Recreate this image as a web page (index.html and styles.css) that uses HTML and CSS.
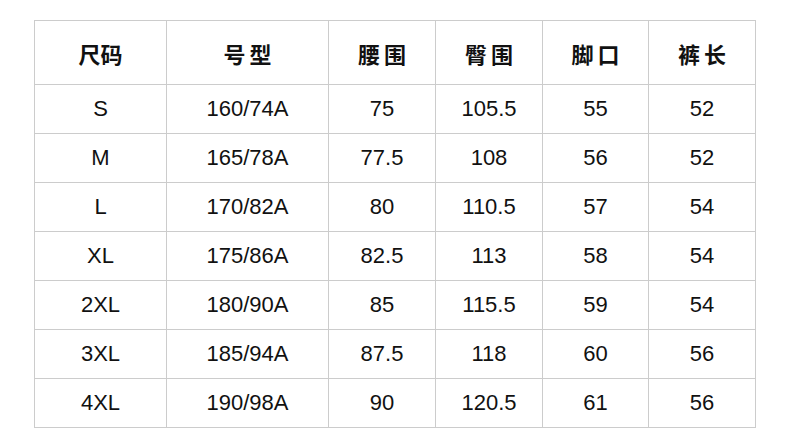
FILE: index.html
```html
<!DOCTYPE html>
<html lang="zh">
<head>
<meta charset="utf-8">
<link rel="stylesheet" href="styles.css">
</head>
<body>
<div class="size-table">
  <div class="cell head tight">尺码</div>
  <div class="cell head">号型</div>
  <div class="cell head">腰围</div>
  <div class="cell head">臀围</div>
  <div class="cell head">脚口</div>
  <div class="cell head">裤长</div>

  <div class="cell">S</div><div class="cell">160/74A</div><div class="cell">75</div><div class="cell">105.5</div><div class="cell">55</div><div class="cell">52</div>
  <div class="cell">M</div><div class="cell">165/78A</div><div class="cell">77.5</div><div class="cell">108</div><div class="cell">56</div><div class="cell">52</div>
  <div class="cell">L</div><div class="cell">170/82A</div><div class="cell">80</div><div class="cell">110.5</div><div class="cell">57</div><div class="cell">54</div>
  <div class="cell">XL</div><div class="cell">175/86A</div><div class="cell">82.5</div><div class="cell">113</div><div class="cell">58</div><div class="cell">54</div>
  <div class="cell">2XL</div><div class="cell">180/90A</div><div class="cell">85</div><div class="cell">115.5</div><div class="cell">59</div><div class="cell">54</div>
  <div class="cell">3XL</div><div class="cell">185/94A</div><div class="cell">87.5</div><div class="cell">118</div><div class="cell">60</div><div class="cell">56</div>
  <div class="cell">4XL</div><div class="cell">190/98A</div><div class="cell">90</div><div class="cell">120.5</div><div class="cell">61</div><div class="cell">56</div>
</div>
</body>
</html>
```

FILE: styles.css
```css
html, body {
  margin: 0;
  padding: 0;
  background: #fff;
}
body {
  padding: 20px 0 0 34px;
  font-family: "Liberation Sans", "Noto Sans CJK SC", sans-serif;
  color: #111;
}
.size-table {
  display: inline-grid;
  grid-template-columns: 131px 161px 106px 106px 105px 106px;
  grid-template-rows: 63px repeat(7, 48px);
  gap: 1px;
  padding: 1px;
  background: #cccccc;
}
.cell {
  background: #fff;
  display: flex;
  align-items: center;
  justify-content: center;
  font-size: 22px;
  line-height: 1;
  padding-bottom: 1px;
}
.head {
  font-family: "Noto Sans CJK SC", sans-serif;
  font-weight: 700;
  font-size: 22px;
  letter-spacing: 4px;
  padding-left: 4px;
  padding-bottom: 0;
}
.head.tight {
  letter-spacing: 0;
  padding-left: 0;
}
```
